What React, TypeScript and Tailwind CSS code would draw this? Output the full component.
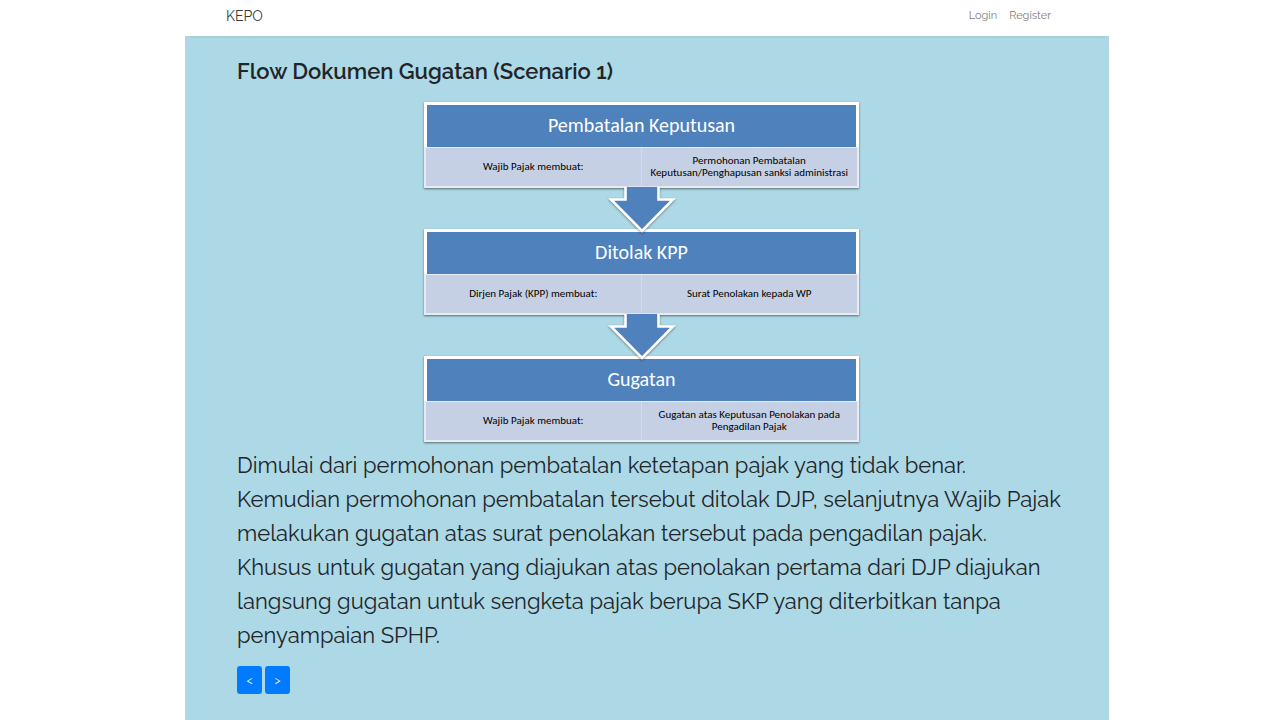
import { Fragment } from "react";

type Step = { title: string; actor: string; document: string[] };

const steps: Step[] = [
  {
    title: "Pembatalan Keputusan",
    actor: "Wajib Pajak membuat:",
    document: ["Permohonan Pembatalan", "Keputusan/Penghapusan sanksi administrasi"],
  },
  {
    title: "Ditolak KPP",
    actor: "Dirjen Pajak (KPP) membuat:",
    document: ["Surat Penolakan kepada WP"],
  },
  {
    title: "Gugatan",
    actor: "Wajib Pajak membuat:",
    document: ["Gugatan atas Keputusan Penolakan pada", "Pengadilan Pajak"],
  },
];

const lines = [
  "Dimulai dari permohonan pembatalan ketetapan pajak yang tidak benar.",
  "Kemudian permohonan pembatalan tersebut ditolak DJP, selanjutnya Wajib Pajak",
  "melakukan gugatan atas surat penolakan tersebut pada pengadilan pajak.",
  "Khusus untuk gugatan yang diajukan atas penolakan pertama dari DJP diajukan",
  "langsung gugatan untuk sengketa pajak berupa SKP yang diterbitkan tanpa",
  "penyampaian SPHP.",
];

function Arrow() {
  return (
    <svg
      className="relative z-10 -mt-px -mb-1 h-[46px] w-[70px] drop-shadow-[0_1px_1px_rgba(0,0,0,0.4)]"
      viewBox="0 0 70 46"
      aria-hidden="true"
    >
      <path d="M19 0V12.5H4L35 44L66 12.5H51V0Z" fill="#4f81bd" />
      <path d="M18.5 0V12.5H4L35 44L66 12.5H51.5V0" fill="none" stroke="#fff" strokeWidth="2.6" />
    </svg>
  );
}

function StepCard({ step }: { step: Step }) {
  return (
    <section className="w-full shadow-[0_1px_2px_rgba(0,0,0,0.5)]">
      <h2 className="flex h-[45px] items-center justify-center border-3 border-b-0 border-white bg-[#4f81bd] pb-0.5 text-xl leading-6 text-white">
        {step.title}
      </h2>
      <div className="grid h-[41px] grid-cols-2 border-2 border-t-1 border-[#e6ebf4] bg-[#c5d0e4] text-center text-[11px] leading-3 text-black">
        <p className="flex items-center justify-center border-r border-[#d5ddec]">{step.actor}</p>
        <p className="flex flex-col items-center justify-center whitespace-nowrap">
          {step.document.map((line) => (
            <span key={line}>{line}</span>
          ))}
        </p>
      </div>
    </section>
  );
}

export default function App() {
  return (
    <div className="min-h-screen bg-white pr-[171px] pl-[185px] font-['Raleway','Lato',sans-serif] text-[#212529]">
      <div className="flex min-h-screen flex-col">
        <nav className="relative z-10 flex h-9 items-center justify-between pr-[58px] pb-1 pl-[41px] shadow-[0_3px_3px_-3px_rgba(0,0,0,0.15)]">
          <a href="#" className="text-sm text-[#343a40]">
            KEPO
          </a>
          <div className="flex gap-3 text-[11px] text-[#808080]">
            <a href="#login">Login</a>
            <a href="#register">Register</a>
          </div>
        </nav>
        <main className="grow bg-[#add8e6] pt-5 pr-[63px] pb-6 pl-[52px]">
          <h1 className="text-[22px] leading-[30px] font-semibold">Flow Dokumen Gugatan (Scenario 1)</h1>
          <div className="mx-auto mt-4 flex max-w-[435px] flex-col items-center font-['Carlito','Lato',sans-serif]">
            {steps.map((step, index) => (
              <Fragment key={step.title}>
                {index > 0 && <Arrow />}
                <StepCard step={step} />
              </Fragment>
            ))}
          </div>
          <p className="mt-1.5 text-[22px] leading-[34px] whitespace-nowrap">
            {lines.map((line) => (
              <span key={line} className="block">
                {line}
              </span>
            ))}
          </p>
          <div className="mt-3.5 flex gap-[3px]">
            <button
              type="button"
              aria-label="Sebelumnya"
              className="h-7 w-[25px] rounded-[3px] bg-[#007bff] text-xs text-white"
            >
              &lt;
            </button>
            <button
              type="button"
              aria-label="Berikutnya"
              className="h-7 w-[25px] rounded-[3px] bg-[#007bff] text-xs text-white"
            >
              &gt;
            </button>
          </div>
        </main>
      </div>
    </div>
  );
}
